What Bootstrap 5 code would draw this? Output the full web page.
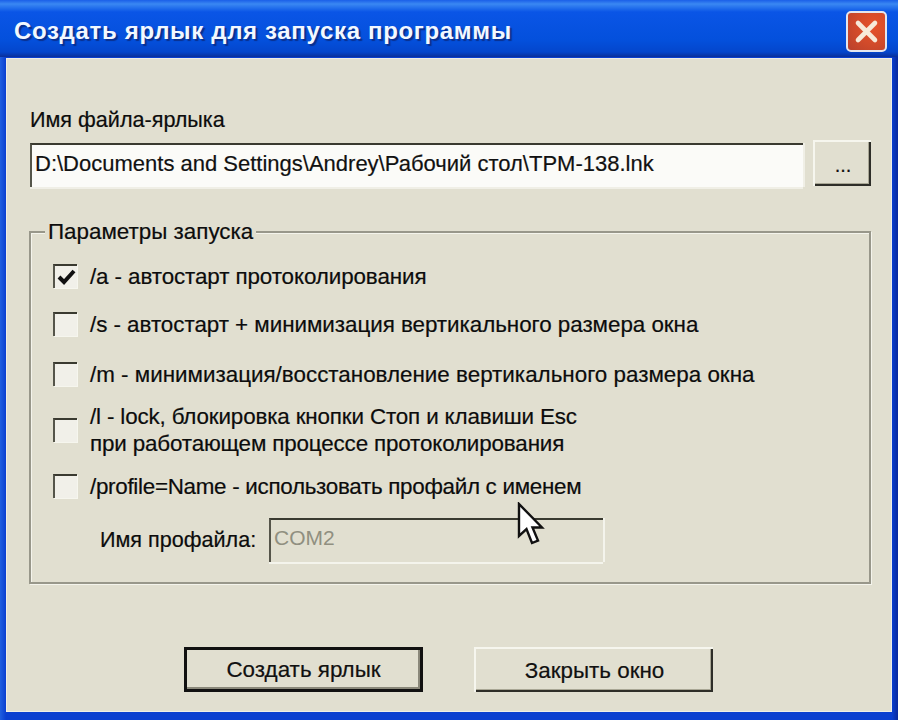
<!doctype html>
<html lang="ru"><head><meta charset="utf-8"><title>Создать ярлык</title>
<link href="https://cdn.jsdelivr.net/npm/bootstrap@5.3.0/dist/css/bootstrap.min.css" rel="stylesheet">
<style>
html,body{width:898px;height:720px;overflow:hidden;margin:0}
body{background:#0a2aa0;font-family:"Liberation Sans",Arial,sans-serif;color:#0c0c0c;font-size:22.4px;-webkit-text-stroke:.2px #0c0c0c}
.xpwin{width:898px;height:720px;position:relative;background:linear-gradient(90deg,#1f5fe0 0,#0a3fd0 6px,#0a3fd0 892px,#0a2a9c 898px)}
.xptitle{height:57px;padding:0 11px 0 14px;background:linear-gradient(180deg,#1a5fe8 0,#3a88f2 4px,#0a55e6 12px,#0450dc 40px,#0446cc 52px,#0a2f9a 57px)}
.xptitle h1{margin:5px 0 0;font-size:24px;font-weight:700;line-height:1;letter-spacing:.67px;color:#f2f8ff;-webkit-text-stroke:0;text-shadow:2px 2px 1px #0a2f8c;font-family:"Liberation Sans",sans-serif}
.xpclose{width:41px;height:41px;border:2px solid #e4e6ee;border-radius:5px;background:radial-gradient(circle at 70% 35%,#e6522a,#d04a2a 55%,#b8412c);padding:0;margin-top:5px}
.xpclient{position:absolute;left:6px;top:58px;width:886px;height:654px;background:#e1dfd0;box-shadow:inset 0 0 0 1px #eeeee6;padding:50px 21px 0 24px}
.xplabel{line-height:24px;height:24px;display:block;margin:0 0 11px;font-size:21.6px}
.filerow{gap:10px;align-items:flex-start}
.xpfield{width:775px;height:44px;border-radius:0;border:0;border-top:2px solid #3a3a30;border-left:2px solid #55554a;box-shadow:0 2px 0 #f0efe6,2px 0 0 #f0efe6;background:#fbfbf8;color:#111;font-size:22px;padding:0 0 5px 3px;font-family:inherit;-webkit-text-stroke:.2px #111}
.xpbtn{border-radius:0;background:#e1dfd0;color:#111;font-family:inherit;font-size:22.4px;padding:0;border:0;border-top:2px solid #f6f6ee;border-left:2px solid #f6f6ee;box-shadow:inset -2px -2px 0 #2e2e28,inset -3px -3px 0 #a9a795}
.xpbtn:hover,.xpbtn:active{background:#e1dfd0;color:#111}
.browse{width:58px;height:46px;margin-top:-3px;line-height:1;padding-top:2px;font-size:20px}
.xpgroup{position:relative;margin:44px 0 0 -1px;width:842px;height:353px;border:2px solid #98978a;box-shadow:inset 1px 1px 0 #f4f4ec,1px 1px 0 #f4f4ec;padding:27px 0 0 22px}
.xpgroup legend{position:absolute;left:14px;top:-13px;width:auto;margin:0;padding:0 3px;background:#e1dfd0;font-size:22.4px;line-height:24px;float:none}
.optrow{display:flex;align-items:center;gap:13px;line-height:27px}
.r1{height:32px;letter-spacing:-.1px}.r2{height:32px;margin-top:16px;letter-spacing:-.04px}.r3{height:32px;margin-top:18px}.r4{height:54px;margin-top:13px;letter-spacing:-.15px}.r5{height:32px;margin-top:13px;letter-spacing:-.29px}
.xpcheck{flex:none;width:24px;height:24px;border-top:2px solid #3a3a30;border-left:2px solid #55554a;background:#f1f0e9;box-shadow:1px 1px 0 #f6f6ee;display:flex;align-items:center;justify-content:center;padding:0}
.profrow{margin:16px 0 0 47px;align-items:center}
.proflabel{width:169px;flex:none;font-size:21.6px}
.xpdis{width:334px;height:44px;border-radius:0;border:0;border-top:2px solid #3a3a30;border-left:2px solid #55554a;box-shadow:0 2px 0 #f4f4ec,2px 0 0 #f4f4ec;background:#e1dfd0;color:#908f80;font-size:21px;padding:0 0 7px 3px;font-family:inherit;-webkit-text-stroke:0}
.xpdis:disabled{background:#e1dfd0}
.actions{gap:51px;margin:63px 0 0 154px}
.act{width:239px;height:45px}
.act.primary{border:3px solid #111;box-shadow:inset -2px -2px 0 #8a887a}
.pointer{position:absolute;left:517px;top:502px}
</style></head><body>
<div class="xpwin">
<div class="xptitle d-flex align-items-center justify-content-between">
<h1>Создать ярлык для запуска программы</h1>
<button class="xpclose d-flex align-items-center justify-content-center" type="button" aria-label="Закрыть"><svg width="25" height="25" viewBox="0 0 25 25"><path d="M4 4 21 21M21 4 4 21" stroke="#f7ead8" stroke-width="4.6" stroke-linecap="round"/></svg></button>
</div>
<div class="xpclient">
<label class="xplabel">Имя файла-ярлыка</label>
<div class="d-flex filerow">
<input class="form-control xpfield" value="D:\Documents and Settings\Andrey\Рабочий стол\TPM-138.lnk">
<button class="btn xpbtn browse" type="button">...</button>
</div>
<fieldset class="xpgroup">
<legend>Параметры запуска</legend>
<div class="optrow r1"><span class="xpcheck"><svg width="19" height="17" viewBox="0 0 19 17"><path d="M2 8 7 13 17 2" fill="none" stroke="#111" stroke-width="4"/></svg></span><span>/a - автостарт протоколирования</span></div>
<div class="optrow r2"><span class="xpcheck"></span><span>/s - автостарт + минимизация вертикального размера окна</span></div>
<div class="optrow r3"><span class="xpcheck"></span><span>/m - минимизация/восстановление вертикального размера окна</span></div>
<div class="optrow r4"><span class="xpcheck"></span><span>/l - lock, блокировка кнопки Стоп и клавиши Esc<br>при работающем процессе протоколирования</span></div>
<div class="optrow r5"><span class="xpcheck"></span><span>/profile=Name - использовать профайл с именем</span></div>
<div class="d-flex profrow"><span class="proflabel">Имя профайла:</span><input class="form-control xpdis" value="COM2" disabled></div>
</fieldset>
<div class="d-flex actions">
<button class="btn xpbtn act primary" type="button">Создать ярлык</button>
<button class="btn xpbtn act" type="button">Закрыть окно</button>
</div>
</div>
<svg class="pointer" width="28" height="44" viewBox="0 0 28 44"><path d="M2 2V34L9.500 27 15 41 21 38.500 15.500 25.500H25Z" fill="#fff" stroke="#111" stroke-width="2.400" stroke-linejoin="miter"/></svg>
</div>
</body></html>
